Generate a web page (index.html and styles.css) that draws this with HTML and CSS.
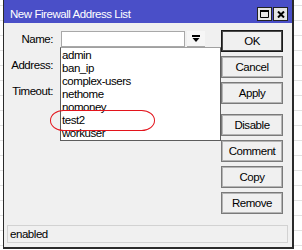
FILE: index.html
```html
<!DOCTYPE html>
<html lang="en">
<head>
    <meta charset="UTF-8">
    <title>New Firewall Address List</title>
    <link rel="stylesheet" href="styles.css">
</head>
<body>
    <div class="window">
        <div class="titlebar">
            <span class="title">New Firewall Address List</span>
            <div class="title-buttons">
                <span class="tbtn">
                    <svg width="9" height="8" viewBox="0 0 9 8"><path d="M0.5 1h8M0.5 1v6.5h8V1" fill="none" stroke="#000" stroke-width="1"/><rect x="0" y="0" width="9" height="2" fill="#000"/></svg>
                </span>
                <span class="tbtn">
                    <svg width="8" height="7" viewBox="0 0 8 7"><path d="M1 0.5l6 6M7 0.5l-6 6" stroke="#000" stroke-width="2"/></svg>
                </span>
            </div>
        </div>

        <div class="content">
            <!-- fields -->
            <div class="form">
                <div class="row">
                    <label>Name:</label>
                    <div class="field name-field">
                        <div class="list">
                            <div class="item">admin</div>
                            <div class="item">ban_ip</div>
                            <div class="item">complex-users</div>
                            <div class="item">nethome</div>
                            <div class="item">nomoney</div>
                            <div class="item">test2</div>
                            <div class="item">workuser</div>
                            <div class="mark"></div>
                        </div>
                    </div>
                    <span class="drop">
                        <svg width="8" height="7" viewBox="0 0 8 7"><rect x="0" y="0" width="8" height="2" fill="#000"/><path d="M0.5 3h7L4 7z" fill="#000"/></svg>
                    </span>
                </div>
                <div class="row">
                    <label>Address:</label>
                    <div class="field wide"></div>
                </div>
                <div class="row">
                    <label>Timeout:</label>
                    <div class="field wide"></div>
                </div>
            </div>

            <!-- buttons -->
            <div class="buttons">
                <button class="default">OK</button>
                <button>Cancel</button>
                <button class="group-end">Apply</button>
                <button>Disable</button>
                <button>Comment</button>
                <button>Copy</button>
                <button>Remove</button>
            </div>
        </div>

        <div class="status">enabled</div>
    </div>
</body>
</html>
```

FILE: styles.css
```css
body {
    margin: 0;
    font-family: "Liberation Sans", Arial, sans-serif;
    font-size: 11.5px;
    letter-spacing: -0.45px;
    color: #000;
    background: repeating-linear-gradient(to bottom, #fff 0 5px, #e2e2e2 5px 6px, #fff 6px 15px);
    height: 250px;
    overflow: hidden;
}
.window { margin-left: 3px; width: 291px; height: 249px; box-sizing: border-box; border-left: 1px solid #2a2a2a; border-right: 2px solid #2a2a2a; border-bottom: 2px solid #2a2a2a; background: #f0f0f0; display: flex; flex-direction: column; }
.titlebar { height: 23px; background: #4a4fc8; display: flex; align-items: flex-start; }
.title { color: #fff; padding: 7px 0 0 6px; line-height: 15px; flex: 1; }
.title-buttons { display: flex; gap: 1px; margin: 7px 4px 0 0; }
.tbtn { width: 15px; height: 14px; box-sizing: border-box; border: 1px solid #222; background: #e4e4e4; display: flex; align-items: center; justify-content: center; }

.content { display: flex; padding: 7px 9px 0 0; }
.form { flex: 1; padding-top: 1px; }
.row { display: flex; align-items: center; height: 16px; margin-bottom: 10px; }
.row label { width: 49px; text-align: right; margin-right: 8px; }
.field { width: 124px; height: 16px; box-sizing: border-box; border: 1px solid #a8a8a8; background: #fff; }
.field.wide { width: 157px; }
.name-field { position: relative; }
.drop { width: 18px; height: 16px; margin-left: 2px; box-sizing: border-box; border-bottom: 1px solid #a8a8a8; background: #f6f6f6; display: flex; align-items: center; justify-content: center; }

.list { position: absolute; top: 15px; left: -2px; width: 161px; z-index: 2; box-sizing: border-box; border: 1px solid #5c5c5c; border-top-color: #a0a0a0; background: #fff; padding: 1px 0 0 1px; }
.item { line-height: 13px; height: 13px; }
.mark { position: absolute; left: -11px; top: 62px; width: 105px; height: 21px; box-sizing: border-box; border: 1px solid #e3141c; border-radius: 14px / 11px; }

.buttons { width: 62px; display: flex; flex-direction: column; }
button { font: inherit; letter-spacing: inherit; color: #000; height: 22px; margin: 0 0 4px; padding: 0; background: #f0f0f0; border: 1px solid #7a7a7a; box-shadow: inset 0 0 0 1px #b4b4b4; }
button.default { border-color: #1a1a1a; box-shadow: inset 0 0 0 1px #4a4a4a; }
button.group-end { margin-bottom: 10px; }

.status { margin: auto 4px 4px 3px; height: 18px; box-sizing: border-box; border: 1px solid #d2d2d2; padding-left: 2px; line-height: 16px; }
```
